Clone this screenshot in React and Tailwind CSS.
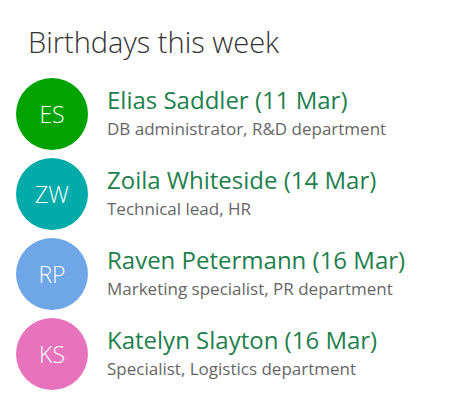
const people = [
  { i: "ES", name: "Elias Saddler (11 Mar)", role: "DB administrator, R&D department", bg: "bg-[#00a300]" },
  { i: "ZW", name: "Zoila Whiteside (14 Mar)", role: "Technical lead, HR", bg: "bg-[#00aba9]" },
  { i: "RP", name: "Raven Petermann (16 Mar)", role: "Marketing specialist, PR department", bg: "bg-[#6ea6e8]" },
  { i: "KS", name: "Katelyn Slayton (16 Mar)", role: "Specialist, Logistics department", bg: "bg-[#e773bd]" },
];

export default function App() {
  return (
    <div className="w-[454px] h-[411px] bg-white font-['Open_Sans',sans-serif] pl-4 pt-[22px]">
      <h1 className="pl-[12px] text-[29px] leading-[40px] font-light text-[#333333]">Birthdays this week</h1>
      <div className="mt-4 flex flex-col gap-2">
        {people.map((p) => (
          <div key={p.i} className="flex items-center h-[72px]">
            <div className={`w-[72px] h-[72px] shrink-0 rounded-full ${p.bg} flex items-center justify-center text-white text-[23px] font-light`}>
              {p.i}
            </div>
            <div className="ml-[19px] mb-[4px] flex flex-col">
              <div className="text-[24px] leading-[32px] text-[#1e7f4d]">{p.name}</div>
              <div className="text-[17px] leading-[24px] text-[#666666] mt-[1px]">{p.role}</div>
            </div>
          </div>
        ))}
      </div>
    </div>
  );
}
